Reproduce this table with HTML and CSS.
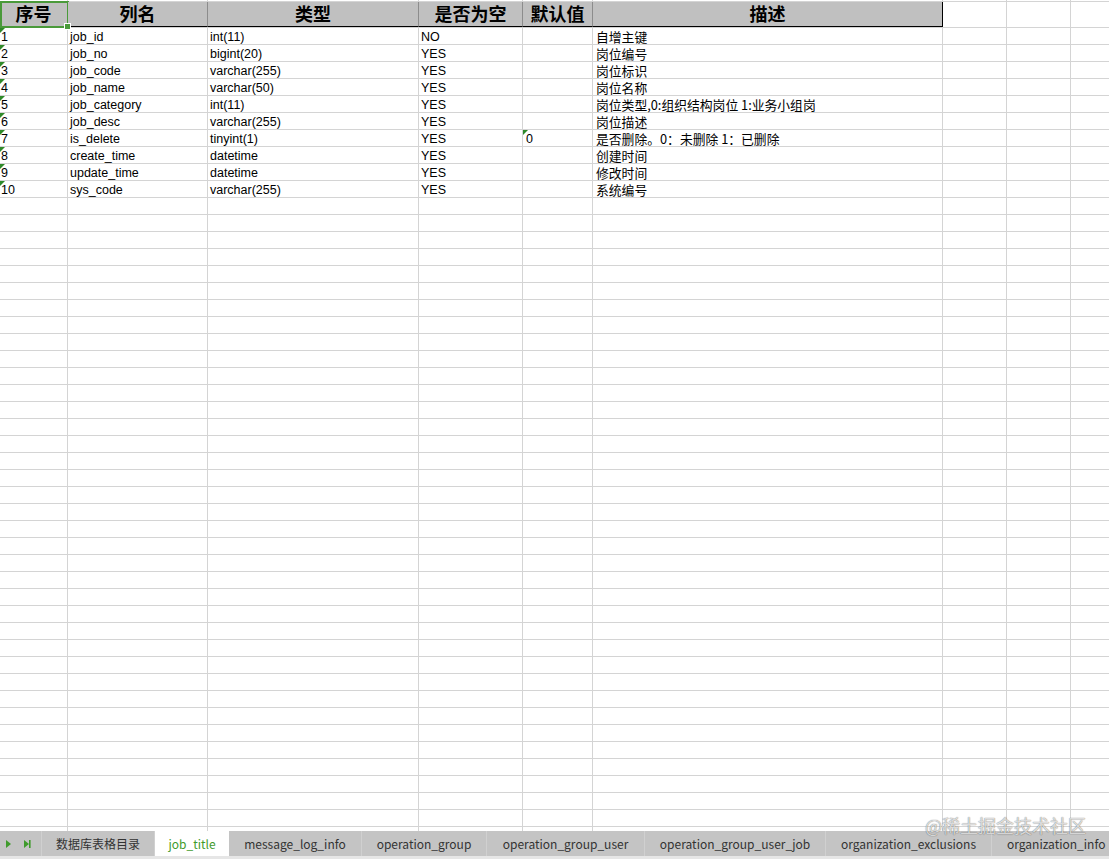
FILE: index.html
```html
<!DOCTYPE html>
<html lang="zh">
<head>
<meta charset="utf-8">
<title>job_title</title>
<link rel="stylesheet" href="styles.css">
</head>
<body>
<div class="app">
  <div class="sheet">
    <div class="row top">
      <div class="c a"></div><div class="c b"></div><div class="c cc"></div><div class="c d"></div><div class="c e"></div><div class="c f"></div><div class="c g"></div><div class="c h"></div><div class="c i"></div>
    </div>
    <div class="row head">
      <div class="c a sel">序号</div><div class="c b">列名</div><div class="c cc">类型</div><div class="c d">是否为空</div><div class="c e">默认值</div><div class="c f">描述</div><div class="c g blank"></div><div class="c h blank"></div><div class="c i blank"></div>
    </div>
    <div class="row"><div class="c a tri">1</div><div class="c b">job_id</div><div class="c cc">int(11)</div><div class="c d">NO</div><div class="c e"></div><div class="c f">自增主键</div><div class="c g"></div><div class="c h"></div><div class="c i"></div></div>
    <div class="row"><div class="c a tri">2</div><div class="c b">job_no</div><div class="c cc">bigint(20)</div><div class="c d">YES</div><div class="c e"></div><div class="c f">岗位编号</div><div class="c g"></div><div class="c h"></div><div class="c i"></div></div>
    <div class="row"><div class="c a tri">3</div><div class="c b">job_code</div><div class="c cc">varchar(255)</div><div class="c d">YES</div><div class="c e"></div><div class="c f">岗位标识</div><div class="c g"></div><div class="c h"></div><div class="c i"></div></div>
    <div class="row"><div class="c a tri">4</div><div class="c b">job_name</div><div class="c cc">varchar(50)</div><div class="c d">YES</div><div class="c e"></div><div class="c f">岗位名称</div><div class="c g"></div><div class="c h"></div><div class="c i"></div></div>
    <div class="row"><div class="c a tri">5</div><div class="c b">job_category</div><div class="c cc">int(11)</div><div class="c d">YES</div><div class="c e"></div><div class="c f">岗位类型,0:组织结构岗位 1:业务小组岗</div><div class="c g"></div><div class="c h"></div><div class="c i"></div></div>
    <div class="row"><div class="c a tri">6</div><div class="c b">job_desc</div><div class="c cc">varchar(255)</div><div class="c d">YES</div><div class="c e"></div><div class="c f">岗位描述</div><div class="c g"></div><div class="c h"></div><div class="c i"></div></div>
    <div class="row"><div class="c a tri">7</div><div class="c b">is_delete</div><div class="c cc">tinyint(1)</div><div class="c d">YES</div><div class="c e tri">0</div><div class="c f">是否删除。0：未删除 1：已删除</div><div class="c g"></div><div class="c h"></div><div class="c i"></div></div>
    <div class="row"><div class="c a tri">8</div><div class="c b">create_time</div><div class="c cc">datetime</div><div class="c d">YES</div><div class="c e"></div><div class="c f">创建时间</div><div class="c g"></div><div class="c h"></div><div class="c i"></div></div>
    <div class="row"><div class="c a tri">9</div><div class="c b">update_time</div><div class="c cc">datetime</div><div class="c d">YES</div><div class="c e"></div><div class="c f">修改时间</div><div class="c g"></div><div class="c h"></div><div class="c i"></div></div>
    <div class="row"><div class="c a tri">10</div><div class="c b">sys_code</div><div class="c cc">varchar(255)</div><div class="c d">YES</div><div class="c e"></div><div class="c f">系统编号</div><div class="c g"></div><div class="c h"></div><div class="c i"></div></div>
    <div class="filler">
      <div class="c a"></div><div class="c b"></div><div class="c cc"></div><div class="c d"></div><div class="c e"></div><div class="c f"></div><div class="c g"></div><div class="c h"></div><div class="c i"></div>
    </div>
  </div>
  <div class="tabs">
    <div class="nav">
      <svg width="30" height="12" viewBox="0 0 30 12"><path d="M4 2 L9 6 L4 10 Z" fill="#3f9b2c"/><path d="M22 2 L27 6 L22 10 Z" fill="#3f9b2c"/><rect x="27" y="2" width="1.6" height="8" fill="#3f9b2c"/></svg>
    </div>
    <div class="tab t1">数据库表格目录</div>
    <div class="tab t2 active">job_title</div>
    <div class="tab t3">message_log_info</div>
    <div class="tab t4">operation_group</div>
    <div class="tab t5">operation_group_user</div>
    <div class="tab t6">operation_group_user_job</div>
    <div class="tab t7">organization_exclusions</div>
    <div class="tab t8">organization_info</div>
  </div>
  <div class="foot"></div>
  <div class="watermark">@稀土掘金技术社区</div>
</div>
</body>
</html>
```
FILE: styles.css
```css
* { box-sizing: border-box; }
html, body { margin: 0; padding: 0; background: #fff; }
body { font-family: "Liberation Sans", Arial, "Noto Sans CJK SC", sans-serif; font-size: 12.5px; color: #000; }
.app { position: relative; width: 1109px; height: 859px; overflow: hidden; display: flex; flex-direction: column; }
.sheet { height: 831px; flex: none; overflow: hidden; display: flex; flex-direction: column; }
.row { display: flex; height: 17px; border-bottom: 1px solid #d4d4d4; flex: none; }
.c { flex: none; height: 100%; border-right: 1px solid #d4d4d4; padding-left: 3px; padding-top: 1px; line-height: 16px; white-space: nowrap; overflow: visible; position: relative; }
.a { width: 68px; padding-left: 1px; }
.b { width: 140px; padding-left: 2px; }
.cc { width: 211px; padding-left: 2px; }
.d { width: 104px; padding-left: 2px; }
.e { width: 70px; }
.f { width: 350px; padding-left: 3px; font-family: "Noto Sans CJK SC", "Liberation Sans", sans-serif; font-size: 12.8px; }
.g { width: 64px; }
.h { width: 64px; }
.i { width: 80px; }
.top { height: 2px; }
.top .c { padding: 0; }
.head { height: 26px; border-bottom: 1px solid #d4d4d4; }
.head .c { background: #c0c0c0; font-family: "Noto Sans CJK SC", sans-serif; font-weight: 700; font-size: 18px; line-height: 23px; text-align: center; padding: 0; border-right-color: #8c8c8c; border-bottom: 1px solid #000; }
.head .c.blank { background: #fff; border-bottom: none; border-right-color: #d4d4d4; }
.head .f { border-right-color: #000; }
.head .sel::after { content: ""; position: absolute; left: 0; top: -1px; right: -2px; bottom: -2px; border: 2px solid #4a9a3a; }
.head .sel::before { content: ""; position: absolute; right: -4px; bottom: -4px; width: 5px; height: 5px; background: #4a9a3a; border: 1px solid #fff; z-index: 2; }
.tri::before { content: ""; position: absolute; left: 0; top: 0; border-top: 5px solid #2f8a2a; border-right: 5px solid transparent; }
.filler { flex: 1; display: flex; background: repeating-linear-gradient(to bottom, transparent 0, transparent 16px, #d4d4d4 16px, #d4d4d4 17px); }
.filler .c { height: 100%; }
.tabs { height: 25px; flex: none; display: flex; overflow: hidden; background: #c4c4c4; font-family: "Noto Sans CJK SC", "Noto Sans", sans-serif; font-size: 12px; color: #333; }
.nav { flex: none; width: 42px; border-right: 1px solid #d0d0d0; display: flex; align-items: center; padding-left: 2px; }
.tab { flex: none; border-right: 1px solid #d0d0d0; display: flex; align-items: center; justify-content: center; line-height: 1; white-space: nowrap; }
.tab.active { background: #fff; color: #3f9b2c; border-right: none; }
.t1 { width: 113px; }
.t2 { width: 74px; }
.t3 { width: 133px; }
.t4 { width: 125px; }
.t5 { width: 158px; }
.t6 { width: 181px; }
.t7 { width: 166px; }
.t8 { width: 117px; border-right: none; justify-content: flex-start; padding-left: 15px; overflow: hidden; }
.foot { flex: 1; background: #e6e6e6; }
.watermark { position: absolute; left: 925px; top: 812px; font-family: "Noto Sans CJK SC", sans-serif; font-size: 18px; color: rgba(255,255,255,0.75); text-shadow: 0 0 1px rgba(0,0,0,0.45), 0 0 1px rgba(0,0,0,0.3); white-space: nowrap; }
```
